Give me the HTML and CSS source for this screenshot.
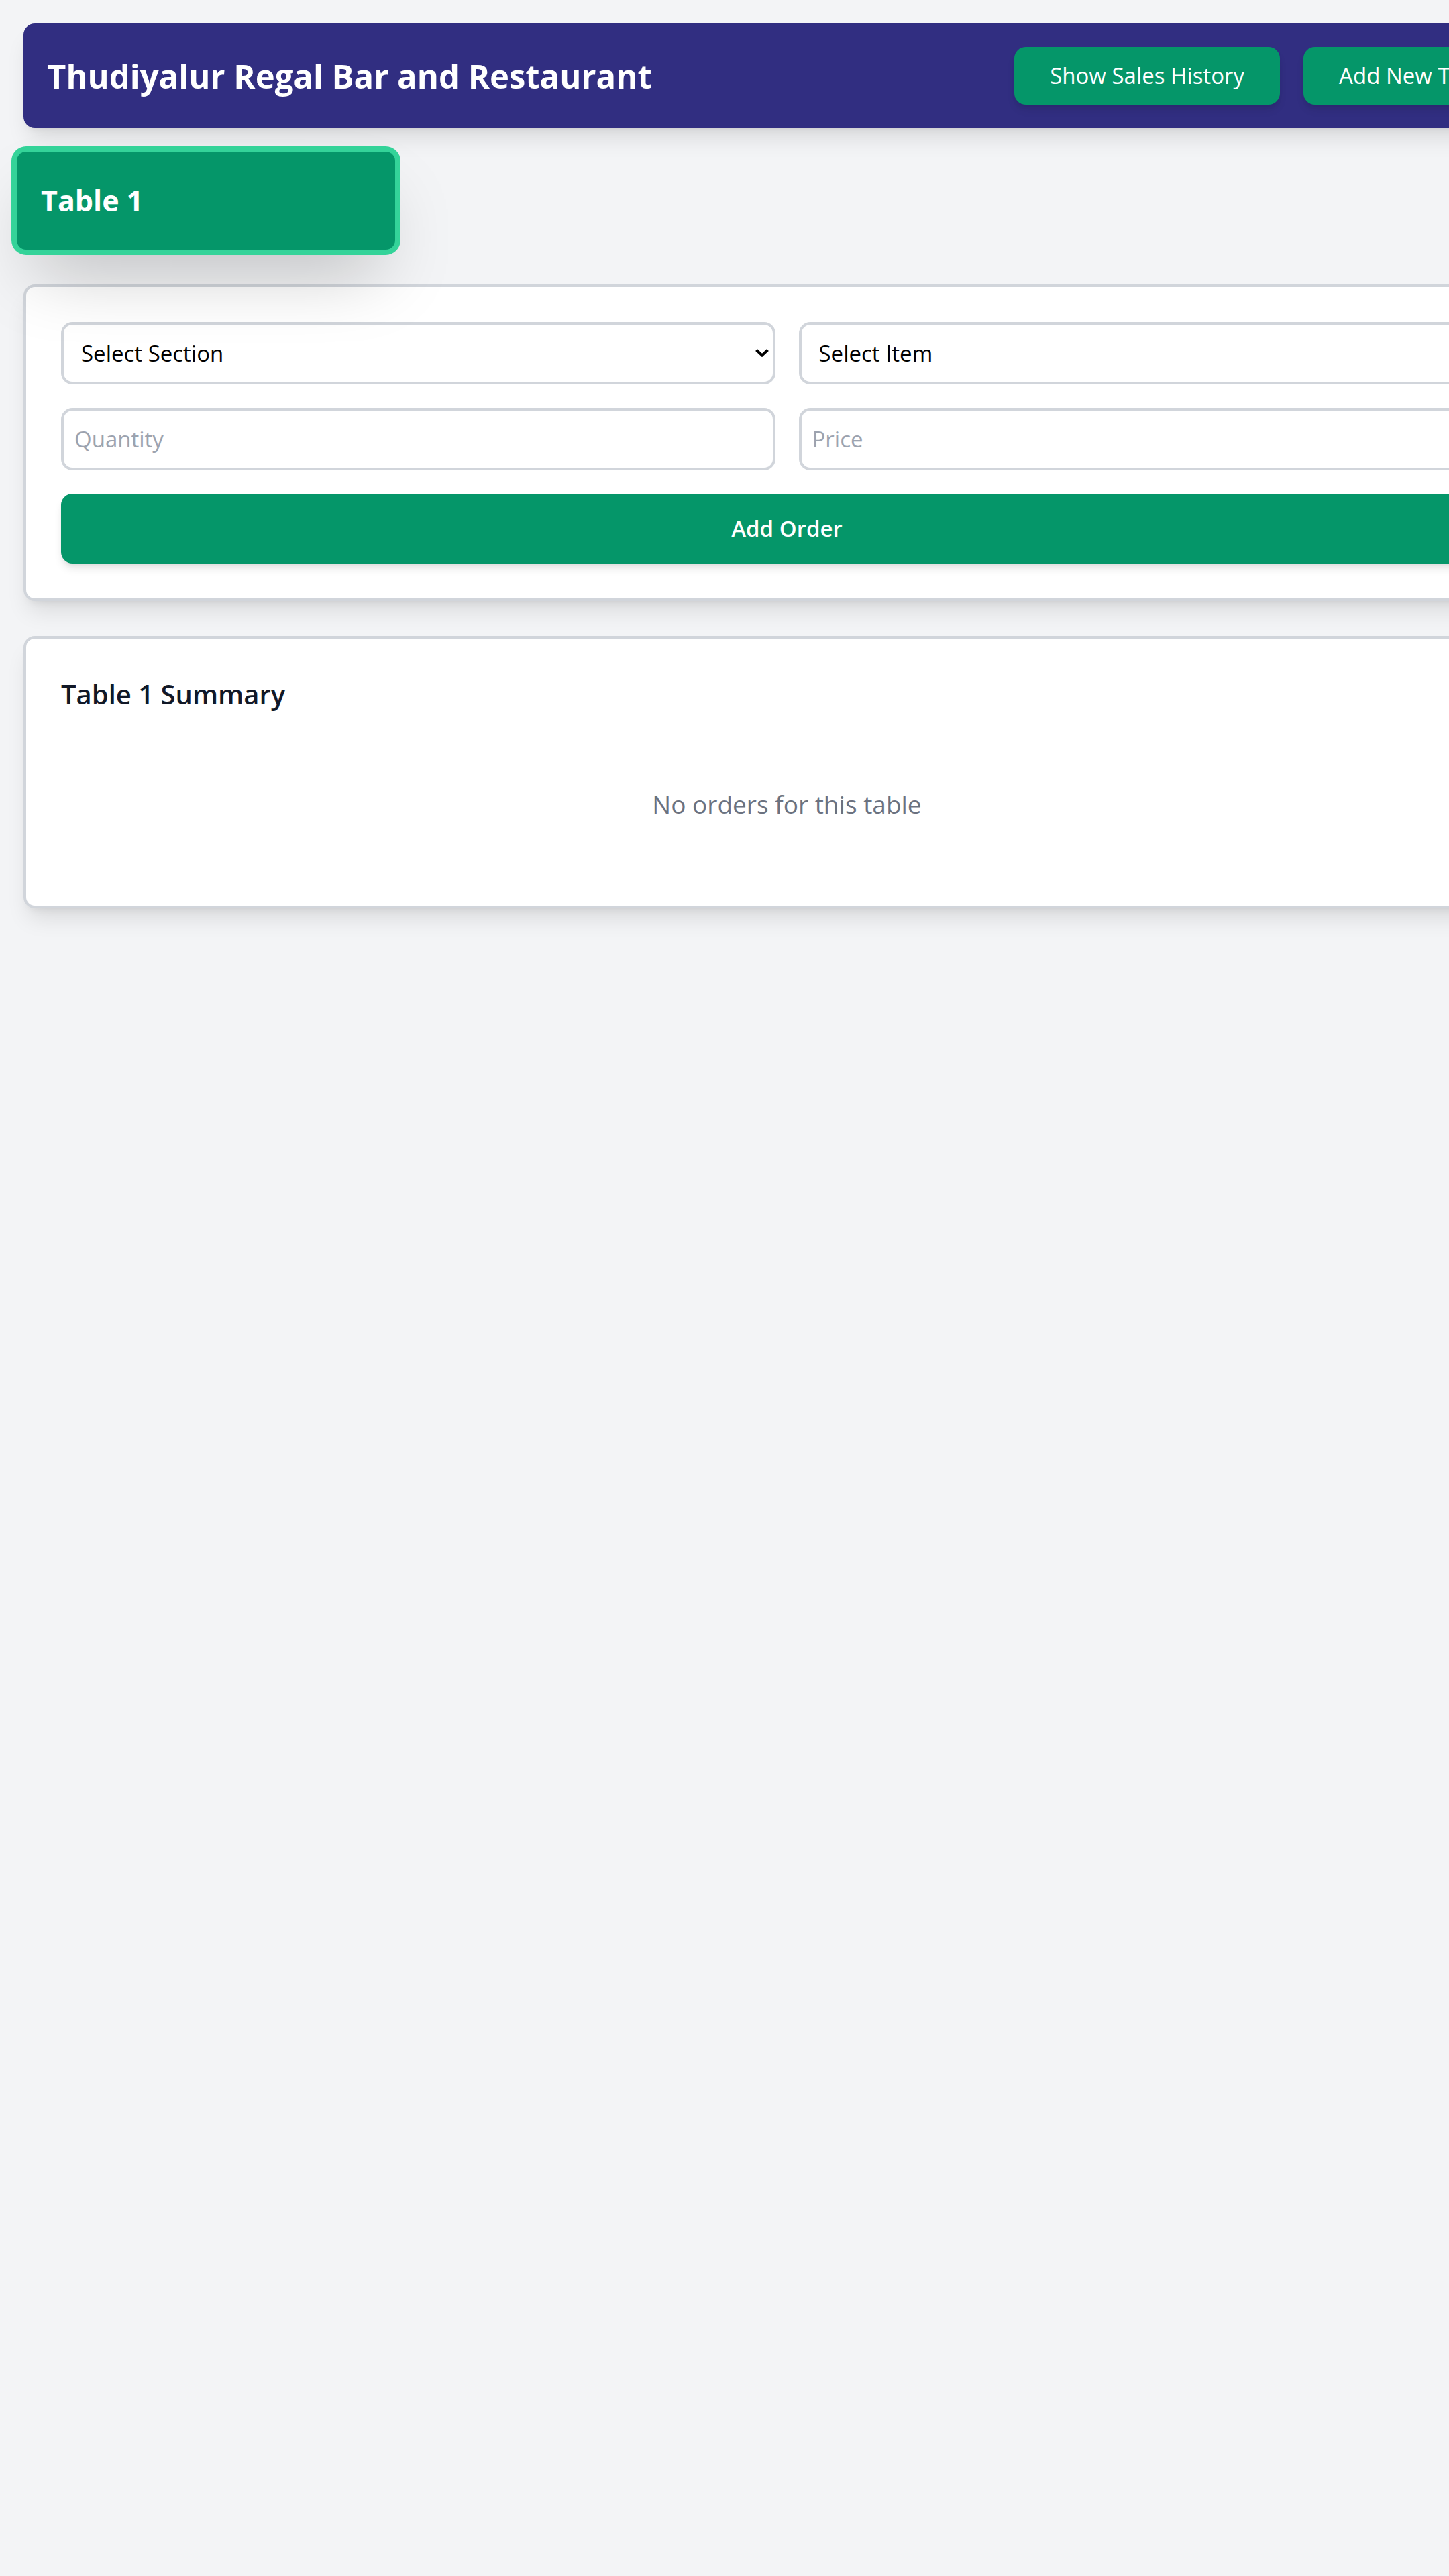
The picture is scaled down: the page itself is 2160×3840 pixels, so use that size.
FILE: index.html
```html
<!DOCTYPE html>
<html lang="en">
<head>
<meta charset="utf-8">
<meta name="viewport" content="width=device-width, initial-scale=1">
<title>Thudiyalur Regal Bar and Restaurant</title>
<link rel="stylesheet" href="styles.css">
</head>
<body>
<div class="page">
  <header class="topbar">
    <h1 class="brand">Thudiyalur Regal Bar and Restaurant</h1>
    <div class="actions">
      <button type="button" class="btn">Show Sales History</button>
      <button type="button" class="btn">Add New Table</button>
    </div>
  </header>

  <nav class="tables" aria-label="Tables">
    <button type="button" class="table-card">Table 1</button>
  </nav>

  <main class="content">
    <form class="card order-form">
      <div class="field">
        <select class="control select" aria-label="Section">
          <option>Select Section</option>
        </select>
        <svg class="chevron" viewBox="0 0 20 12" aria-hidden="true"><path d="M1.500 1.500 10 9.500 18.500 1.500"/></svg>
      </div>
      <div class="field">
        <select class="control select" aria-label="Item">
          <option>Select Item</option>
        </select>
        <svg class="chevron" viewBox="0 0 20 12" aria-hidden="true"><path d="M1.500 1.500 10 9.500 18.500 1.500"/></svg>
      </div>
      <input class="control input" type="number" placeholder="Quantity" aria-label="Quantity">
      <input class="control input" type="number" placeholder="Price" aria-label="Price">
      <button type="button" class="btn submit">Add Order</button>
    </form>

    <section class="card summary">
      <h2 class="summary-title">Table 1 Summary</h2>
      <p class="empty">No orders for this table</p>
    </section>
  </main>
</div>
</body>
</html>
```
FILE: styles.css
```css
*, *::before, *::after { box-sizing: border-box; }

:root {
  --green: #059669;
  --ring: #34d399;
  --line: #d1d5db;
  --shadow-md: 0 9px 13px -2px rgba(0, 0, 0, .1), 0 4px 9px -4px rgba(0, 0, 0, .1);
  --shadow-lg: 0 22px 33px -7px rgba(0, 0, 0, .1), 0 9px 13px -9px rgba(0, 0, 0, .1);
}

html { overflow-x: hidden; }

body {
  margin: 0;
  min-height: 100vh;
  background: #f3f4f6;
  color: #111827;
  font-family: "Open Sans", "Noto Sans", sans-serif;
  font-size: 33px;
  line-height: 52px;
  overflow-x: hidden;
}

h1, h2, p { margin: 0; }

button, input, select { font: inherit; }

/* The page is wider than the window and runs off its right edge. */
.page {
  width: calc(100% + 186px);
  padding: 35px;
}

.topbar {
  display: flex;
  align-items: center;
  justify-content: space-between;
  padding: 35px 31px 35px 35px;
  border-radius: 17px;
  background: #312e81;
  color: #fff;
  box-shadow: var(--shadow-lg);
}

.brand {
  font-size: 49px;
  font-weight: 700;
  line-height: 70px;
}

.actions {
  display: flex;
  gap: 35px;
}

.btn {
  padding: 17px 53px;
  border: 0;
  border-radius: 17px;
  background: var(--green);
  color: #fff;
  box-shadow: var(--shadow-md);
}

.tables {
  position: relative;
  z-index: 1;
  display: flex;
  margin: 35px -10px 52px;
}

.table-card {
  width: 564px;
  padding: 38px 36px;
  border: 0;
  border-radius: 14px;
  background: var(--green);
  color: #fff;
  font-size: 43px;
  font-weight: 700;
  line-height: 70px;
  text-align: left;
  box-shadow: 0 0 0 8px var(--ring), 0 54px 108px -26px rgba(0, 0, 0, .25);
}

.content {
  display: grid;
  gap: 52px;
}

.card {
  padding: 52px;
  border: 4px solid var(--line);
  border-radius: 17px;
  background: #fff;
  box-shadow: var(--shadow-lg);
}

.order-form {
  display: grid;
  grid-template-columns: 1fr 1fr;
  gap: 35px;
}

.field {
  position: relative;
  display: grid;
}

.control {
  width: 100%;
  height: 93px;
  border: 4px solid var(--line);
  border-radius: 17px;
  background: transparent;
  outline: 0;
}

.select {
  appearance: none;
  padding: 0 53px 0 26px;
  color: #000;
}

.input {
  appearance: textfield;
  padding: 0 16px;
  color: #111827;
}

.input::placeholder {
  color: #9ca3af;
  opacity: 1;
}

.chevron {
  position: absolute;
  top: 40px;
  right: 10px;
  width: 20px;
  height: 12px;
  fill: none;
  stroke: #000;
  stroke-width: 4;
  pointer-events: none;
}

.submit {
  grid-column: 1 / -1;
  padding: 26px 53px;
  font-weight: 600;
}

.summary-title {
  margin-bottom: 35px;
  font-size: 40px;
  font-weight: 600;
  line-height: 61px;
}

.empty {
  padding: 69px 0;
  color: #6b7280;
  font-size: 37px;
  line-height: 60px;
  text-align: center;
}
```
